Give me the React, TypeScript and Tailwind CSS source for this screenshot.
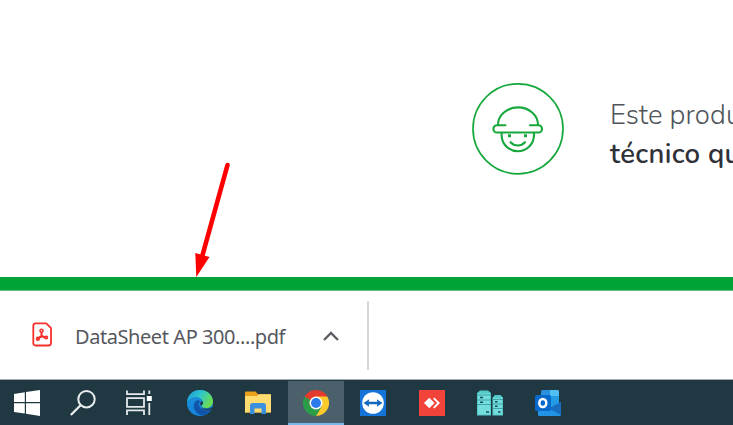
import type { ReactNode } from 'react';

function WorkerBadge() {
  return (
    <svg className="block h-[94px] w-[94px] shrink-0" viewBox="471 82 94 94" fill="none" stroke="#16a83c" strokeLinecap="round" strokeLinejoin="round">
      <circle cx="518" cy="128.800" r="45" strokeWidth="1.700" />
      <g strokeWidth="2.100">
        <path d="M505.500 125.300H497a3.600 3.600 0 0 0 0 7.200h41.400a3.600 3.600 0 0 0 0-7.200H530" />
        <path d="M498 125a20 17.600 0 0 1 40 0" />
        <path d="M501.600 133v2a16.200 16.200 0 0 0 32.400 0V133" />
        <path d="M510.500 142.200c4 4.300 10.500 4.300 14.500 0" />
      </g>
      <path d="M509.500 134.200v3M525.500 134.200v3" strokeWidth="3" strokeLinecap="butt" />
    </svg>
  );
}

function PdfIcon() {
  return (
    <svg className="block h-[25px] w-5 shrink-0" viewBox="32 321 20 25" fill="none" stroke="#f5302a" strokeLinejoin="round" strokeLinecap="round">
      <path d="M35.500 322.300H46.300L51 327.200V342a2.500 2.500 0 0 1-2.500 2.500H35.500a2.200 2.200 0 0 1-2.200-2.500V324.800a2.500 2.500 0 0 1 2.200-2.500Z" strokeWidth="1.800" />
      <path d="M41.500 332v2.700L38 337.800M41.500 334.700 45.300 336.700" strokeWidth="2" />
      <circle cx="41.500" cy="329.800" r="1.500" strokeWidth="1.600" />
      <circle cx="37.900" cy="337.800" r="1.400" strokeWidth="1.600" />
      <circle cx="46.200" cy="336.500" r="1.300" strokeWidth="1.600" />
      <path d="M38.500 337.300c2-1.600 4.500-2 7-1.200" strokeWidth="1.500" />
    </svg>
  );
}

function Slot({ className, children }: { className: string; children: ReactNode }) {
  return <div className={`flex h-full shrink-0 items-center justify-center ${className}`}>{children}</div>;
}

const icon = 'block h-[26px] w-[26px]';

function Windows() {
  return (
    <svg className={icon} viewBox="0 0 26 26" fill="#fff">
      <path d="M0 4 10.800 2.200V12H0ZM12 2 26 0V12H12ZM0 13.300H10.800V23.500L0 22ZM12 13.300H26V26L12 23.700Z" />
    </svg>
  );
}

function Search() {
  return (
    <svg className={icon} viewBox="0 0 26 26" fill="none" stroke="#e9edee" strokeWidth="2">
      <circle cx="16.500" cy="9.200" r="8.200" />
      <path d="M10.800 15 .8 25" strokeWidth="2.300" />
    </svg>
  );
}

function TaskView() {
  return (
    <svg className={icon} viewBox="0 0 26 26" fill="none" stroke="#e4e9eb" strokeWidth="1.800">
      <path d="M1 .5V4.200H18V.5M1 25V20.300H18V25M1 8.200H18V16.800H1Z" />
      <path d="M23.300.5V4M23.300 13V25" />
      <path d="M20.800 6h5v5h-5Z" fill="#fff" stroke="none" />
    </svg>
  );
}

function Edge() {
  return (
    <svg className={icon} viewBox="0 0 26 26">
      <defs>
        <linearGradient id="edgeTop" x1="0" y1="0" x2="1" y2=".5">
          <stop offset="0" stopColor="#1b95db" />
          <stop offset=".5" stopColor="#2dc5cb" />
          <stop offset="1" stopColor="#69dc55" />
        </linearGradient>
        <linearGradient id="edgeLeft" x1="0" y1="0" x2=".6" y2="1">
          <stop offset="0" stopColor="#1a91dc" />
          <stop offset="1" stopColor="#1683dc" />
        </linearGradient>
      </defs>
      <circle cx="13" cy="13" r="13" fill="url(#edgeLeft)" />
      <path d="M0 12C1 4.500 6 0 13 0c8 0 13 5.500 13 11.500 0 4-3 6.500-6.500 6.500-3 0-5-1-5-2 0-.8 1.500-1.500 1.500-3.500 0-3-3-5.500-7-5.500-5 0-8 3-9 5Z" fill="url(#edgeTop)" />
      <path d="M9 11c-2.500 2-3 6-1 9.500 2 3.300 5 5 8 5 3.500-.8 6.500-3 8.500-6-5 2-10 .5-12-3-1-1.800-.8-3 .3-4.800.5-1.200-2-2.200-3.800-.7Z" fill="#1055a9" />
      <path d="M14.500 16c-1.800-1-1.800-3.300-.3-4.800 1 0 1.800.8 1.800 1.800 0 1.500-1.500 2-1.500 3Z" fill="#203b49" />
      <path d="M14 16.500c1 2.500 7 3.500 11 .5l-.7 2.400c-4 1.500-9 1-10.300-2.900Z" fill="#203b49" />
    </svg>
  );
}

function Folder() {
  return (
    <svg className={icon} viewBox="0 0 26 26">
      <path d="M0 2.500a1 1 0 0 1 1-1H10.500L13 4.200H25a1 1 0 0 1 1 1V22.500H0Z" fill="#eba01b" />
      <path d="M0 6H12L14 4.200H26V22.500H0Z" fill="#ffdb70" />
      <path d="M5 24V15.500A2.500 2.500 0 0 1 7.500 13h11a2.500 2.500 0 0 1 2.500 2.500V24H16.500V18.500H9.500V24Z" fill="#3b91df" />
    </svg>
  );
}

function Chrome() {
  return (
    <svg className={icon} viewBox="0 0 26 26">
      <path d="M13 13 1.740 6.500A13 13 0 0 1 24.260 6.500Z" fill="#e43b2e" />
      <path d="M13 6.500H24.260A13 13 0 0 1 13 26L18.630 16.250Z" fill="#fbc92c" />
      <path d="M1.740 6.500 7.370 16.250 13 19.500 18.630 16.250 13 26A13 13 0 0 1 1.740 6.500Z" fill="#2b9d48" />
      <path d="M1.740 6.500 7.370 16.250 13 6.500Z" fill="#e43b2e" />
      <path d="M1.740 6.500 7.370 16.250 7.400 10Z" fill="#2b9d48" />
      <circle cx="13" cy="13" r="6.500" fill="#fff" />
      <circle cx="13" cy="13" r="5" fill="#2b7bea" />
    </svg>
  );
}

function TeamViewer() {
  return (
    <svg className={icon} viewBox="0 0 26 26">
      <path d="M0 0H26V26H0Z" fill="#1474d8" />
      <circle cx="13" cy="13" r="10.800" fill="#fff" />
      <path d="M3.500 13 9.200 9.300 8.700 11.700H17.300L16.800 9.300 22.500 13 16.800 16.700 17.300 14.300H8.700L9.200 16.700Z" fill="#1268bd" />
    </svg>
  );
}

function AnyDesk() {
  return (
    <svg className={icon} viewBox="0 0 26 26">
      <path d="M0 0H26V26H0Z" fill="#f1433a" />
      <path d="M5 13 10.300 7.700 15.600 13 10.300 18.300Z" fill="#fff" />
      <path d="M14.800 8.200 19.600 13 14.800 17.800" fill="none" stroke="#fff" strokeWidth="1.900" />
    </svg>
  );
}

function Servers() {
  return (
    <svg className={icon} viewBox="0 0 26 26">
      <path d="M0 3 3 .5H11L14 3V25.500H0ZM15.500 7.500 18 5H23.500L26 7.500V25.500H15.500Z" fill="#55c9c9" />
      <path d="M1 3.500H13V24.500H1ZM16.300 8H25.200V24.500H16.300Z" fill="#72dddb" />
      <path d="M0 5H14M0 10H14M0 14.500H14M15.500 9.500H26M15.500 14H26M15.500 18.500H26" stroke="#3fa5aa" strokeWidth="1.100" />
      <path d="M3 7.500H6M3 12.200H6M18 11.700H20.500M18 16.300H20.500M9 22H12M21 22H23.500" stroke="#164c59" strokeWidth="1.600" />
    </svg>
  );
}

function Outlook() {
  return (
    <svg className={icon} viewBox="0 0 26 26">
      <path d="M6 1.500A1.500 1.500 0 0 1 7.500 0H22.500A1.500 1.500 0 0 1 24 1.500V15H6Z" fill="#2b91df" />
      <path d="M15 0H22.500A1.500 1.500 0 0 1 24 1.500V12H15Z" fill="#50bff4" />
      <path d="M15 6H24V12L18 17H9V6Z" fill="#249be5" />
      <path d="M3 13 15 18.500 26 12V24.500A1.500 1.500 0 0 1 24.500 26H4.500A1.500 1.500 0 0 1 3 24.500Z" fill="#2294e8" />
      <path d="M26 12V25L14 18.500Z" fill="#176ec0" />
      <rect y="5" width="16" height="16" rx="1.500" fill="#0869c9" />
      <ellipse cx="7.800" cy="13" rx="3.500" ry="4" fill="none" stroke="#fff" strokeWidth="2.500" />
    </svg>
  );
}

export default function App() {
  return (
    <div className="relative flex h-[425px] w-[733px] flex-col overflow-hidden bg-white">
      <main className="flex h-[277px] shrink-0 items-start pt-[82px] pl-[471px]">
        <WorkerBadge />
        <div className="mt-3.5 ml-[45px] font-['Nunito','Lato',sans-serif] text-[27.500px] leading-[39px] whitespace-nowrap">
          <p className="font-light tracking-[0.100px] text-[#50545b]">Este produ</p>
          <p className="font-semibold tracking-[0.320px] text-[#303239]">técnico qu</p>
        </div>
      </main>
      <div className="h-3.5 shrink-0 border-b border-[#65bd7f] bg-[#00a335]" />
      <footer className="flex h-[88px] shrink-0 items-center pl-8">
        <div className="pb-0.5"><PdfIcon /></div>
        <span className="ml-[23px] w-[211px] shrink-0 pt-[3px] font-['Segoe_UI','Noto_Sans','Open_Sans',sans-serif] text-[20px] tracking-[-0.430px] whitespace-nowrap text-[#55585e]">DataSheet AP 300....pdf</span>
        <svg className="mt-0.5 ml-[37px] block h-3 w-4" viewBox="0 0 16 12" fill="none" stroke="#5d6064" strokeWidth="2.400">
          <path d="m1 10 7-7 7 7" />
        </svg>
        <div className="ml-7 h-[69px] w-[2px] bg-[#d6d7d9]" />
      </footer>
      <nav className="flex h-[46px] shrink-0 border-t border-[#a3adb1] bg-[#203842] pt-px">
        <Slot className="w-[53px]"><Windows /></Slot>
        <Slot className="w-[60px]"><Search /></Slot>
        <Slot className="w-[52px]"><TaskView /></Slot>
        <Slot className="ml-[5px] w-[60px]"><Edge /></Slot>
        <Slot className="w-[56px]"><Folder /></Slot>
        <Slot className="ml-[2px] w-[56px] border-b-2 border-[#76b9ed] bg-[#4b606a] pt-0.5"><Chrome /></Slot>
        <Slot className="w-[58px]"><TeamViewer /></Slot>
        <Slot className="ml-px w-[57px]"><AnyDesk /></Slot>
        <Slot className="w-[59px]"><Servers /></Slot>
        <Slot className="w-[57px]"><Outlook /></Slot>
      </nav>
      <svg className="absolute top-[160px] left-[190px] h-[118px] w-[44px]" viewBox="190 160 44 118">
        <path d="M227.500 165 202 257" stroke="#fe0000" strokeWidth="4.600" strokeLinecap="round" />
        <path d="M195.300 253 209.500 257 196.300 277Z" fill="#fe0000" />
      </svg>
    </div>
  );
}
